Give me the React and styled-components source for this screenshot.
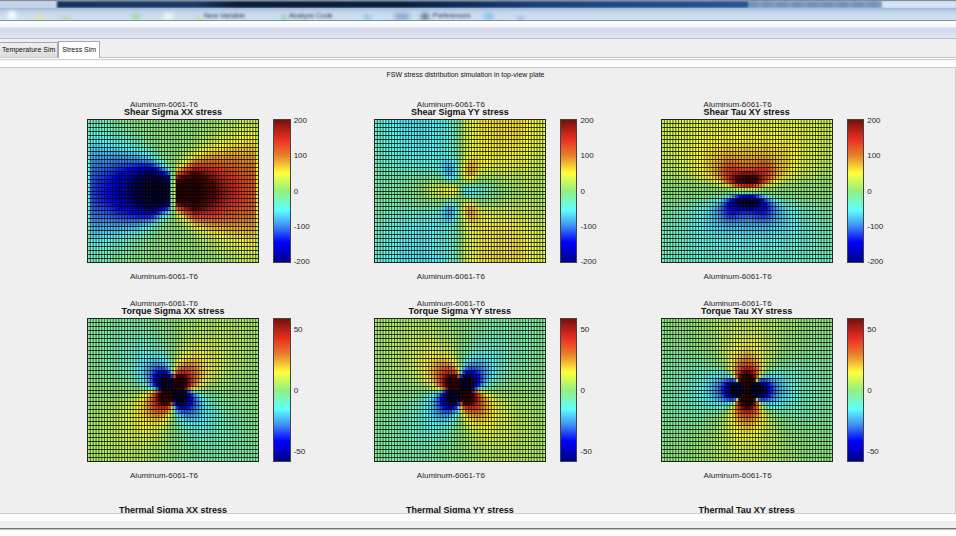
import React, { useState } from 'react';
import styled, { createGlobalStyle } from 'styled-components';

const COLS = 60;
const ROWS = 36;
const WIDTH = 171;
const HEIGHT = 143;

const COLOR_STOPS = [
  [-1.5, [0, 0, 42]],
  [-1.05, [0, 0, 100]],
  [-1, [0, 0, 136]],
  [-0.72, [0, 0, 255]],
  [-0.5, [62, 138, 244]],
  [-0.27, [92, 255, 255]],
  [0, [148, 240, 128]],
  [0.25, [255, 255, 60]],
  [0.5, [232, 128, 44]],
  [0.72, [236, 48, 32]],
  [1, [118, 16, 14]],
  [1.05, [96, 6, 4]],
  [1.5, [44, 0, 0]],
];

const getColor = value => {
  const last = COLOR_STOPS[COLOR_STOPS.length - 1];
  const v = Math.max(-1.5, Math.min(last[0], value));
  const i = COLOR_STOPS.findIndex(stop => stop[0] >= v);
  const [b, to] = COLOR_STOPS[i];
  const [a, from] = COLOR_STOPS[Math.max(0, i - 1)];
  const t = b === a ? 0 : (v - a) / (b - a);
  return `rgb(${from.map((c, n) => Math.round(c + (to[n] - c) * t)).join(',')})`;
};

// bell curve of the distance from a centre, width w
const bell = (d, w) => Math.exp(-((d / w) ** 2));

// mean of fn over a contact patch of half width a
const spread = (fn, a) => {
  let sum = 0;
  for (let i = 0; i <= 12; i++) sum += fn(-a + (i * a) / 6);
  return sum / 13;
};

const shearXX = (x, y) => {
  const ax = Math.abs(x);
  const peak = Math.min(380, 9600 / (ax + 3));
  let value = peak * bell(y, 14 + ax * 0.5) + 8 * (ax / 85);
  if (ax < 2) value *= 0.1;
  if (ax > 83) value *= 0.5;
  return (Math.sign(x) * value) / 203;
};

const shearYY = (x, y) => {
  const ax = Math.abs(x);
  const ay = Math.abs(y);
  const far = (66 + ay * 0.15) * (ax / (ax + 8)) * Math.exp(-((ax / 96) ** 4));
  const wedge =
    200 * bell(y, 8 + ax * 0.32) * Math.exp(-ax / 36) * (ax / (ax + 6));
  const spot = 50 * bell(ax - 10, 8) * bell(ay - 20, 12);
  return (Math.sign(x) * (far - wedge + spot)) / 203;
};

const shearXY = (x, y) => {
  const ax = Math.abs(x);
  const ay = Math.abs(y);
  const fan = spread(s => {
    const r2 = (x - s) * (x - s) + y * y + 1;
    return (3600 * ay * (x - s) * (x - s)) / (r2 * r2) + (2700 * ay) / r2;
  }, 15);
  const core = 150 * bell(ax, 14) * bell(ay - 11, 6);
  const wings = 30 * bell(ax - 17, 10) * bell(ay - 22, 10);
  return (-Math.sign(y) * (fan * (1 - bell(ay, 10)) + core + wings)) / 203;
};

// four lobes round the tool; they get fuller towards the centre
const lobes = (angular, r) => {
  const power = 0.35 + 0.75 * Math.min(1, r / 45);
  const size = Math.abs(angular) ** power * (6600 / r ** 1.6);
  return (Math.sign(angular) * size) / 59;
};

const torque = (x, y) => {
  const r = Math.hypot(x, y);
  return lobes((-2 * x * y) / (r * r), r);
};

const torqueXY = (x, y) => {
  const r = Math.hypot(x, y);
  return lobes((y * y - x * x) / (r * r), r);
};

const WIDE_TICKS = ['200', '100', '0', '-100', '-200'];
const NARROW_TICKS = ['50', '0', '-50'];

const PLOTS = [
  { title: 'Shear Sigma XX stress', field: shearXX, ticks: WIDE_TICKS },
  { title: 'Shear Sigma YY stress', field: shearYY, ticks: WIDE_TICKS },
  { title: 'Shear Tau XY stress', field: shearXY, ticks: WIDE_TICKS },
  { title: 'Torque Sigma XX stress', field: torque, ticks: NARROW_TICKS },
  {
    title: 'Torque Sigma YY stress',
    field: (x, y) => -torque(x, y),
    ticks: NARROW_TICKS,
  },
  { title: 'Torque Tau XY stress', field: torqueXY, ticks: NARROW_TICKS },
  { title: 'Thermal Sigma XX stress' },
  { title: 'Thermal Sigma YY stress' },
  { title: 'Thermal Tau XY stress' },
];

function StressMap({ field, title }) {
  const cw = WIDTH / COLS;
  const ch = HEIGHT / ROWS;
  const cells = [];
  let columns = '';
  let rows = '';

  for (let row = 0; row < ROWS; row++) {
    for (let col = 0; col < COLS; col++) {
      const x = (col + 0.5) * cw - WIDTH / 2;
      const y = (row + 0.5) * ch - HEIGHT / 2;
      cells.push(
        <rect
          key={`${row}-${col}`}
          x={col * cw}
          y={row * ch}
          width={cw + 0.3}
          height={ch + 0.3}
          fill={getColor(field(x, y))}
        />
      );
    }
  }
  for (let col = 0; col <= COLS; col++) columns += `M${col * cw} 0V${HEIGHT}`;
  for (let row = 0; row <= ROWS; row++) {
    rows += `M0 ${Math.round(row * ch)}H${WIDTH}`;
  }

  return (
    <Map
      viewBox={`-0.5 -0.5 ${WIDTH + 1} ${HEIGHT + 1}`}
      preserveAspectRatio="none"
      role="img"
      aria-label={title}
    >
      {cells}
      <path d={columns} stroke="#000" strokeOpacity="0.8" strokeWidth="0.8" />
      <path d={rows} stroke="#000" strokeOpacity="0.75" strokeWidth="1" />
      <path
        d={`M0 0H${WIDTH}V${HEIGHT}H0z`}
        fill="none"
        stroke="#222"
        strokeWidth="1"
      />
    </Map>
  );
}

function Plot({ title, field, ticks }) {
  return (
    <PlotCell>
      <Material>{field && 'Aluminum-6061-T6'}</Material>
      <PlotTitle>{title}</PlotTitle>
      {field && (
        <>
          <PlotBody>
            <StressMap field={field} title={title} />
            <ColorBar />
            <Ticks $short={ticks.length === 3}>
              {ticks.map(tick => (
                <span key={tick}>{tick}</span>
              ))}
            </Ticks>
          </PlotBody>
          <Material>Aluminum-6061-T6</Material>
        </>
      )}
    </PlotCell>
  );
}

function App() {
  const [tab, setTab] = useState('Stress Sim');

  return (
    <Page>
      <GlobalStyle />
      <Backdrop>
        <RibbonTabs>
          <RibbonActive />
          <RibbonDark />
          <RibbonTools />
          <RibbonEnd />
        </RibbonTabs>
        <Ribbon>
          <RibbonArt viewBox="0 0 956 12" preserveAspectRatio="none">
            <ellipse cx="12" cy="8" rx="5" ry="5" fill="#f4fbff" />
            <path d="M34 12l5-8 5 8z" fill="#e4e29a" />
            <path d="M60 12l3-3 7 0v3z" fill="#c9c18c" />
            <circle cx="136" cy="9" r="4" fill="#a9d6a0" />
            <path d="M163 5h11v7h-11z" fill="#edf6e9" />
            <path d="M194 12l4-6 5 6z" fill="#d4d3a0" />
            <path d="M281 12l3-6 3 6z" fill="#83bf83" />
            <path d="M365 6l8 5h-8z" fill="#65b4e8" />
            <path d="M395 5h14v7h-14z" fill="#8fa9d4" />
            <circle cx="425" cy="9" r="4" fill="#66788c" />
            <circle cx="489" cy="9" r="5" fill="#8cc3ec" />
            <path d="M518 10h6v2h-6z" fill="#5a86b5" />
          </RibbonArt>
          <RibbonLabels>
            <span>New Variable</span>
            <span>Analyze Code</span>
            <span>Preferences</span>
          </RibbonLabels>
        </Ribbon>
      </Backdrop>
      <TitleBar />
      <Tabs role="tablist">
        {['Temperature Sim', 'Stress Sim'].map(name => (
          <Tab
            key={name}
            type="button"
            role="tab"
            aria-selected={tab === name}
            $active={tab === name}
            onClick={() => setTab(name)}
          >
            {name}
          </Tab>
        ))}
      </Tabs>
      <Divider />
      <Figure>
        <FigureTitle>
          FSW stress distribution simulation in top-view plate
        </FigureTitle>
        <PlotGrid>
          {PLOTS.map(plot => (
            <Plot key={plot.title} {...plot} />
          ))}
        </PlotGrid>
      </Figure>
      <StatusBar />
    </Page>
  );
}

export default App;

const GlobalStyle = createGlobalStyle`
  * {
    box-sizing: border-box;
  }

  body {
    margin: 0;
    font-family: 'Liberation Sans', Arial, sans-serif;
  }
`;

const Page = styled.div`
  display: flex;
  flex-direction: column;
  height: 100vh;
  overflow: hidden;
  background-color: #fff;
  color: #262626;
`;

const Backdrop = styled.div`
  display: flex;
  flex-direction: column;
  flex: none;
  height: 21px;
  overflow: hidden;
  border-top: 1px solid #868b92;
  border-bottom: 1px solid #7f8e9b;
  background: linear-gradient(#b4c8e2, #cfdff0);
`;

const RibbonTabs = styled.div`
  display: flex;
  flex: none;
  height: 7px;
  filter: blur(1px);
`;

const RibbonActive = styled.div`
  width: 6%;
  background-color: #c5d4e8;
`;

const RibbonDark = styled.div`
  flex: 1;
  background: linear-gradient(
    90deg,
    #17345f,
    #1b3a68 20%,
    #061c38 26%,
    #082040 50%,
    #1b3f7c 70%,
    #275596
  );
`;

const RibbonTools = styled.div`
  width: 14%;
  background: repeating-linear-gradient(90deg, #6f92bf 0 9px, #8199b8 9px 15px);
`;

const RibbonEnd = styled.div`
  width: 24%;
  max-width: 74px;
  background-color: #d5e4f7;
`;

const Ribbon = styled.div`
  position: relative;
  flex: 1;
  overflow: hidden;
  background: linear-gradient(#9fb7d6, #c4d6eb 35%, #d2e1f1);
`;

const RibbonArt = styled.svg`
  display: block;
  width: 100%;
  height: 12px;
  filter: blur(2px);
`;

const RibbonLabels = styled.div`
  position: absolute;
  top: 4px;
  left: 204px;
  display: flex;
  gap: 44px;
  color: #33475c;
  font-size: 7px;
  line-height: 8px;
  white-space: nowrap;
  filter: blur(1px);

  span:last-child {
    margin-left: 56px;
  }
`;

const TitleBar = styled.div`
  flex: none;
  height: 18px;
  border-bottom: 1px solid #b9bcc0;
  background: linear-gradient(#fff 0, #f3f6f9 6px, #d6d9eb 7px, #dfe2f1);
`;

const Tabs = styled.div`
  display: flex;
  align-items: flex-end;
  flex: none;
  height: 19px;
  border-bottom: 1px solid #c6c6c6;
  background-color: #efefef;
`;

const Tab = styled.button`
  height: ${props => (props.$active ? '17px' : '15px')};
  margin-bottom: ${props => (props.$active ? '-1px' : '0')};
  padding: ${props => (props.$active ? '0 3px' : '0 2px')};
  border: 1px solid #a5a8ae;
  border-bottom: none;
  border-left-width: ${props => (props.$active ? '1px' : '0')};
  background: ${props =>
    props.$active ? '#fff' : 'linear-gradient(#f0f0f0, #dcdcdc)'};
  color: #111;
  font-family: inherit;
  font-size: 7px;
  line-height: 12px;
  white-space: nowrap;
`;

const Divider = styled.div`
  flex: none;
  height: 9px;
  border-top: 1px solid #fff;
  background: linear-gradient(#cfcfcf 0 1px, #f6f6f6 1px 2px, #fff 2px);
`;

const Figure = styled.main`
  flex: 1;
  min-height: 0;
  padding-top: 2px;
  overflow: hidden;
  border-top: 1px solid #c9c9c9;
  border-right: 1px solid #cfcfcf;
  border-bottom: 1px solid #cfcfcf;
  background-color: #efefef;
`;

const FigureTitle = styled.h1`
  margin: 0 0 20px;
  padding-right: 24px;
  color: #111;
  font-size: 7px;
  font-weight: normal;
  line-height: 10px;
  text-align: center;
`;

const PlotGrid = styled.div`
  display: grid;
  grid-template-columns: repeat(3, 30%);
  row-gap: 17px;
  padding-left: 87px;
  margin-right: -88px;
`;

const PlotCell = styled.section`
  min-width: 0;
`;

const Material = styled.div`
  height: 10px;
  padding-left: 15%;
  font-size: 8px;
  line-height: 10px;
`;

const PlotTitle = styled.h2`
  width: 60%;
  margin: -3px 0 2px;
  color: #111;
  font-size: 9px;
  line-height: 10px;
  text-align: center;
  white-space: nowrap;
`;

const PlotBody = styled.div`
  display: grid;
  grid-template-columns: 60% 11% 1fr;
  height: 144px;
  margin-bottom: 9px;
`;

const Map = styled.svg`
  display: block;
  width: 100%;
  height: 144px;
`;

const ColorBar = styled.div`
  margin-left: 14px;
  border: 1px solid #444;
  background: linear-gradient(
    ${[1, 0.72, 0.5, 0.25, 0, -0.27, -0.5, -0.72, -1]
      .map(v => `${getColor(v)} ${(1 - v) * 50}%`)
      .join(', ')}
  );
`;

const Ticks = styled.div`
  display: flex;
  flex-direction: column;
  justify-content: space-between;
  margin: ${props => (props.$short ? '7px 0 5px' : '-3px 0 -4px')};
  padding-left: 3px;
  font-size: 8px;
  line-height: 10px;
`;

const StatusBar = styled.footer`
  flex: none;
  height: 22px;
  background: linear-gradient(
    #fff 0 7px,
    #efefef 7px 14px,
    #777 14px 15px,
    #bbb 15px 16px,
    #fff 16px
  );
`;
